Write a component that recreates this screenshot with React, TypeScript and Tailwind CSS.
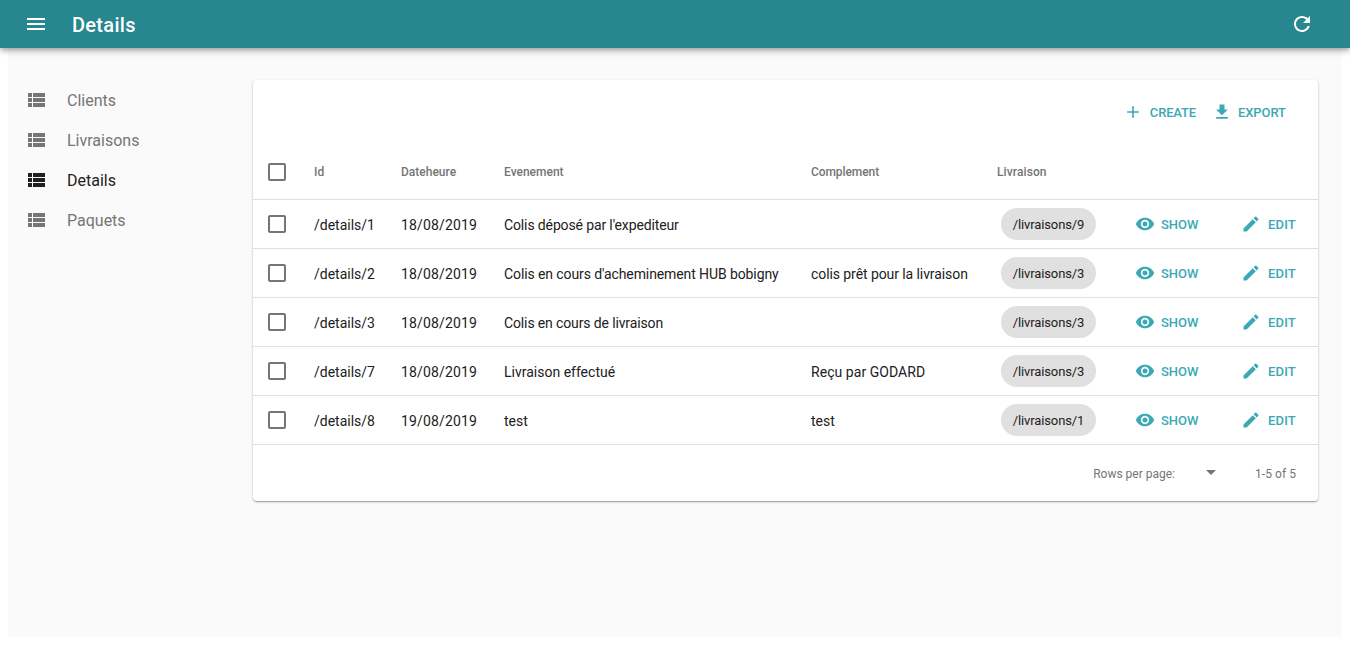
import React from "react";

const Icon = ({ d, className = "" }: { d: string; className?: string }) => (
  <svg viewBox="0 0 24 24" fill="currentColor" className={"shrink-0 " + className}>
    <path d={d} />
  </svg>
);

const MENU = "M3 18h18v-2H3v2zm0-5h18v-2H3v2zm0-7v2h18V6H3z";
const REFRESH =
  "M17.65 6.35C16.2 4.9 14.21 4 12 4c-4.42 0-7.99 3.58-7.99 8s3.57 8 7.99 8c3.73 0 6.84-2.55 7.73-6h-2.08c-.82 2.33-3.04 4-5.65 4-3.31 0-6-2.69-6-6s2.69-6 6-6c1.66 0 3.14.69 4.22 1.78L13 11h7V4l-2.35 2.35z";
const LIST =
  "M4 14h4v-4H4v4zm0 5h4v-4H4v4zM4 9h4V5H4v4zm5 5h12v-4H9v4zm0 5h12v-4H9v4zM9 5v4h12V5H9z";
const ADD = "M19 13h-6v6h-2v-6H5v-2h6V5h2v6h6v2z";
const DOWNLOAD = "M19 9h-4V3H9v6H5l7 7 7-7zM5 18v2h14v-2H5z";
const EYE =
  "M12 4.5C7 4.5 2.73 7.61 1 12c1.73 4.39 6 7.5 11 7.5s9.27-3.11 11-7.5c-1.73-4.39-6-7.5-11-7.5zM12 17c-2.76 0-5-2.24-5-5s2.24-5 5-5 5 2.24 5 5-2.24 5-5 5zm0-8c-1.66 0-3 1.34-3 3s1.34 3 3 3 3-1.34 3-3-1.34-3-3-3z";
const PENCIL =
  "M3 17.25V21h3.75L17.81 9.94l-3.75-3.75L3 17.25zM20.71 7.04c.39-.39.39-1.02 0-1.41l-2.34-2.34c-.39-.39-1.02-.39-1.41 0l-1.83 1.83 3.75 3.75 1.83-1.83z";
const CHECKBOX =
  "M19 5v14H5V5h14m0-2H5c-1.1 0-2 .9-2 2v14c0 1.1.9 2 2 2h14c1.1 0 2-.9 2-2V5c0-1.1-.9-2-2-2z";

const resources = ["Clients", "Livraisons", "Details", "Paquets"];

const rows = [
  { id: "/details/1", date: "18/08/2019", event: "Colis déposé par l'expediteur", eventClass: "tracking-[-0.13px]", extra: "", extraClass: "", delivery: "/livraisons/9" },
  { id: "/details/2", date: "18/08/2019", event: "Colis en cours d'acheminement HUB bobigny", eventClass: "tracking-[-0.1px]", extra: "colis prêt pour la livraison", extraClass: "tracking-[-0.08px]", delivery: "/livraisons/3" },
  { id: "/details/3", date: "18/08/2019", event: "Colis en cours de livraison", eventClass: "tracking-[-0.13px]", extra: "", extraClass: "", delivery: "/livraisons/3" },
  { id: "/details/7", date: "18/08/2019", event: "Livraison effectué", eventClass: "", extra: "Reçu par GODARD", extraClass: "tracking-[0.05px]", delivery: "/livraisons/3" },
  { id: "/details/8", date: "19/08/2019", event: "test", eventClass: "", extra: "test", extraClass: "", delivery: "/livraisons/1" },
];

const COLUMNS = "grid grid-cols-[61px_87px_103px_307px_186px_129px_107px_1fr] items-center border-b border-[#e0e0e0]";

const Action = ({ icon, label, className = "gap-1.5" }: { icon: string; label: string; className?: string }) => (
  <button className={"flex items-center text-[13px] font-medium text-[#3aa9b5] " + className}>
    <Icon d={icon} className="size-5" />
    <span className="pt-0.5">{label}</span>
  </button>
);

const Checkbox = () => (
  <span className="pl-3 text-[#757575]">
    <Icon d={CHECKBOX} className="size-6" />
  </span>
);

export default function App() {
  return (
    <div className="flex h-[645px] flex-col overflow-hidden bg-white font-[Roboto,sans-serif] text-[#212121]">
      <header className="z-10 flex h-12 shrink-0 items-center bg-[#28868f] pr-9 pl-6 text-white shadow-[0px_2px_4px_-1px_rgba(0,0,0,0.2),0px_4px_5px_0px_rgba(0,0,0,0.14),0px_1px_10px_0px_rgba(0,0,0,0.12)]">
        <Icon d={MENU} className="size-6" />
        <h1 className="ml-6 flex-1 pt-0.5 text-xl font-medium tracking-[0.3px]">Details</h1>
        <Icon d={REFRESH} className="size-6" />
      </header>
      <div className="mx-2 mb-2 flex flex-1 items-start bg-[#fafafa]">
        <nav className="w-[245px] pt-8">
          {resources.map((name) => (
            <a
              key={name}
              className={
                "flex h-10 items-center pl-4 text-base " +
                (name === "Details" ? "text-[#212121]" : "text-[#757575]")
              }
            >
              <Icon d={LIST} className="mr-[19px] size-6" />
              <span className="pt-0.5">{name}</span>
            </a>
          ))}
        </nav>
        <main className="mt-8 mr-6 h-[421px] flex-1 rounded bg-white shadow-[0px_1px_3px_0px_rgba(0,0,0,0.2),0px_1px_1px_0px_rgba(0,0,0,0.14),0px_2px_1px_-1px_rgba(0,0,0,0.12)]">
          <div className="flex h-16 items-center justify-end gap-4 pr-8">
            <Action icon={ADD} label="CREATE" className="gap-[7px] tracking-[-0.18px]" />
            <Action icon={DOWNLOAD} label="EXPORT" className="gap-1.5 tracking-[-0.06px]" />
          </div>
          <div className={COLUMNS + " h-14 text-xs font-medium text-[#757575]"}>
            <Checkbox />
            <span>Id</span>
            <span>Dateheure</span>
            <span>Evenement</span>
            <span className="tracking-[-0.08px]">Complement</span>
            <span className="tracking-[0.1px]">Livraison</span>
          </div>
          {rows.map((row) => (
            <div key={row.id} className={COLUMNS + " h-[49px] text-sm whitespace-nowrap"}>
              <Checkbox />
              <span className="pt-0.5">{row.id}</span>
              <span className="pt-0.5 tracking-[0.15px]">{row.date}</span>
              <span className={"pt-0.5 " + row.eventClass}>{row.event}</span>
              <span className={"pt-0.5 " + row.extraClass}>{row.extra}</span>
              <span className="ml-1 flex h-8 w-[95px] items-center justify-center rounded-full bg-[#e0e0e0] pt-0.5 text-[13px] tracking-[-0.12px]">
                {row.delivery}
              </span>
              <Action icon={EYE} label="SHOW" className="ml-[9px] gap-1.5" />
              <Action icon={PENCIL} label="EDIT" className="ml-2 gap-[7px] tracking-[0.15px]" />
            </div>
          ))}
          <div className="flex h-14 items-center pr-[22px] text-xs text-[#757575]">
            <span className="ml-auto pt-0.5">Rows per page:</span>
            <Icon d="M7 10l5 5 5-5z" className="mr-8 mb-0.5 ml-6 size-6" />
            <span className="pt-0.5 tracking-[0.06px]">1-5 of 5</span>
          </div>
        </main>
      </div>
    </div>
  );
}
